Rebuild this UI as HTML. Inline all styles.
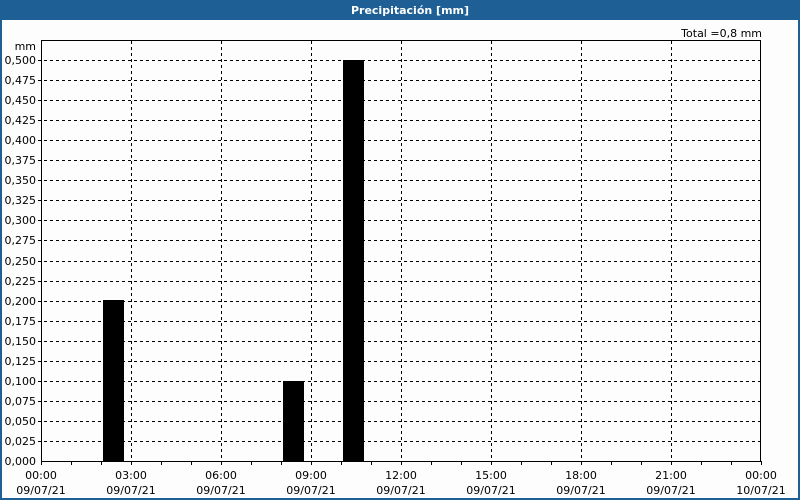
<!DOCTYPE html>
<html><head><style>
html,body{margin:0;padding:0;background:#fff}
svg{display:block}
text{font-family:"DejaVu Sans","Liberation Sans",sans-serif;font-size:11px;fill:#000}
</style></head><body>
<svg width="800" height="500" xmlns="http://www.w3.org/2000/svg" shape-rendering="crispEdges">
<rect x="0" y="0" width="800" height="500" fill="#fdfdfd"/>
<rect x="0" y="0" width="800" height="20" fill="#1e6096"/>
<rect x="0" y="0" width="2" height="500" fill="#1e6096"/>
<rect x="798" y="0" width="2" height="500" fill="#1e6096"/>
<rect x="0" y="498" width="800" height="2" fill="#1e6096"/>
<text x="410" y="14" text-anchor="middle" style="font-weight:bold;fill:#fff">Precipitación [mm]</text>
<text x="762" y="37" text-anchor="end">Total =0,8 mm</text>
<text x="36" y="50" text-anchor="end">mm</text>
<g stroke="#000" stroke-width="1" stroke-dasharray="3,3" id="g">
</g>
<g id="bars" fill="#000">
<rect x="103" y="300" width="21" height="161"/>
<rect x="283" y="381" width="21" height="80"/>
<rect x="343" y="60" width="21" height="401"/>
</g>
<rect x="41.5" y="40.5" width="719" height="421" fill="none" stroke="#000"/>
<g id="lab"></g>
<script>
var ns="http://www.w3.org/2000/svg",g=document.getElementById('g'),lab=document.getElementById('lab');
function el(t,a,p){var e=document.createElementNS(ns,t);for(var k in a)e.setAttribute(k,a[k]);p.appendChild(e);return e;}
for(var i=1;i<=20;i++){var y=461-i*20.05;y=Math.round(y)+0.5;el('line',{x1:38,y1:y,x2:760,y2:y},g);}
for(var i=1;i<=7;i++){var x=41+i*90+0.5;el('line',{x1:x,y1:41,x2:x,y2:461},g);}
for(var i=0;i<=20;i++){var v=(i*0.025).toFixed(3).replace('.',',');var y=Math.round(461-i*20.05);var t=el('text',{x:36,y:y+4,'text-anchor':'end'},lab);t.textContent=v;}
for(var i=0;i<=24;i++){var x=41+i*30+0.5;el('line',{x1:x,y1:461,x2:x,y2:465,stroke:'#000'},lab);}
var hrs=['00:00','03:00','06:00','09:00','12:00','15:00','18:00','21:00','00:00'];
for(var i=0;i<=8;i++){var x=41+i*90;var t=el('text',{x:x,y:479,'text-anchor':'middle'},lab);t.textContent=hrs[i];
var d=el('text',{x:x,y:494,'text-anchor':'middle'},lab);d.textContent=i==8?'10/07/21':'09/07/21';}
</script>
</svg>
</body></html>
